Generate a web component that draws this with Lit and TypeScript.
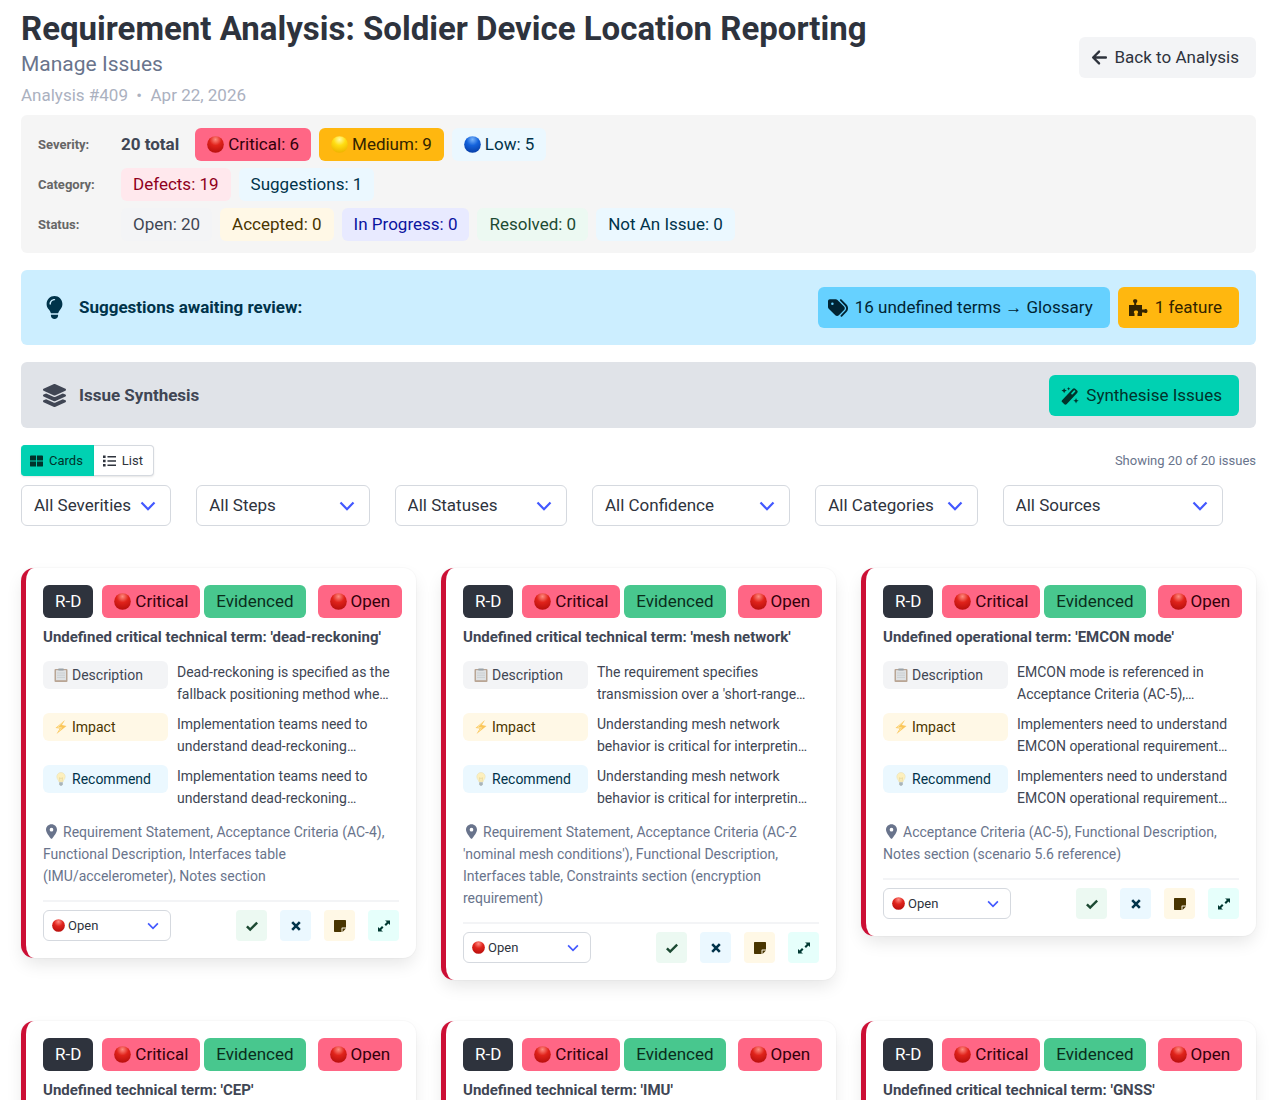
import { LitElement, html, css, svg } from "lit";
import { customElement, property } from "lit/decorators.js";

type Shape = "arrow" | "bulb" | "tags" | "puzzle" | "layers" | "wand" | "grid" | "list" | "chevron" | "check" | "times" | "note" | "expand" | "pin" | "clipboard" | "bolt" | "lamp";

const shapes: Record<Shape, { box: string; body: unknown }> = {
  arrow: { box: "0 0 16 16", body: svg`<path d="M14 8H2.5M7.600 2.400 2 8l5.600 5.600" fill="none" stroke="currentColor" stroke-width="2.200" stroke-linecap="round" stroke-linejoin="round"/>` },
  bulb: { box: "0 0 384 512", body: svg`<path fill="currentColor" d="M272 384c9.600-31.900 29.500-59.100 49.200-86.200l0 0c5.200-7.100 10.400-14.200 15.400-21.400c19.800-28.500 31.400-63 31.400-100.300C368 78.800 289.200 0 192 0S16 78.800 16 176c0 37.300 11.600 71.900 31.400 100.300c5 7.200 10.200 14.300 15.400 21.400l0 0c19.800 27.100 39.700 54.400 49.200 86.200H272zM192 512c44.200 0 80-35.800 80-80V416H112v16c0 44.200 35.800 80 80 80zM112 176c0 8.800-7.200 16-16 16s-16-7.200-16-16c0-61.900 50.100-112 112-112c8.800 0 16 7.200 16 16s-7.200 16-16 16c-44.200 0-80 35.800-80 80z"/>` },
  tags: { box: "0 0 512 512", body: svg`<path fill="currentColor" d="M345 39.100L472.800 168.400c52.400 53 52.400 138.200 0 191.200L360.800 472.900c-9.300 9.400-24.500 9.500-33.900 .2s-9.500-24.500-.2-33.900L438.600 325.900c33.900-34.300 33.900-89.400 0-123.700L310.900 72.900c-9.300-9.400-9.200-24.600 .2-33.900s24.600-9.200 33.900 .2zM0 229.500V80C0 53.500 21.500 32 48 32H197.500c17 0 33.300 6.700 45.300 18.700l168 168c25 25 25 65.500 0 90.500L277.300 442.700c-25 25-65.500 25-90.500 0l-168-168C6.700 262.700 0 246.500 0 229.500zM144 144a32 32 0 1 0 -64 0 32 32 0 1 0 64 0z"/>` },
  puzzle: { box: "0 1 20 20", body: svg`<path fill="currentColor" d="M1 8h5.200V5.900C5.200 5.200 4.900 4.300 5.200 3.200 5.600 1.800 8.800 1.800 9.200 3.200 9.500 4.300 9.200 5.200 8.200 5.900V8H14v4.500h2.300c.5-1 3.200-1 3.200 1.500s-2.700 2.500-3.200 1.500H14V19H9.500v-2.500c1-.6 1-2.900-1.500-2.900S5.500 15.900 6.500 16.500V19H1z"/>` },
  layers: { box: "0 0 512 512", body: svg`<path fill="currentColor" d="M12.400 148l232.900 105.700c6.800 3.100 14.500 3.100 21.300 0l232.900-105.700c16.600-7.500 16.600-32.500 0-40L266.600 2.300a25.600 25.600 0 0 0-21.300 0L12.400 108c-16.600 7.500-16.600 32.500 0 40zm487.200 88.300l-58.100-26.300-161.600 73.300c-7.600 3.400-15.600 5.200-23.900 5.200s-16.300-1.700-23.900-5.200L70.500 210 12.400 236.300c-16.600 7.500-16.600 32.500 0 40l232.900 105.600c6.800 3.100 14.500 3.100 21.300 0l233-105.600c16.600-7.500 16.600-32.500 0-40zm0 127.800l-57.900-26.200-161.900 73.400c-7.600 3.400-15.600 5.200-23.900 5.200s-16.300-1.700-23.900-5.200L70.300 337.900 12.400 364.100c-16.600 7.500-16.600 32.500 0 40l232.900 105.600c6.800 3.100 14.500 3.100 21.300 0l233-105.600c16.600-7.500 16.600-32.500 0-40z"/>` },
  wand: { box: "0 0 20 20", body: svg`<path fill="currentColor" d="M1.200 14.600 13.200 1.900q1.300-1.200 2.600 0l2.100 2.100q1.300 1.300 0 2.600L6.200 19.100q-1.300 1.100-2.500 0l-2.500-2.300q-1-1.100 0-2.200z"/><path d="m12.300 7.300 2.600-2.700" stroke="#00d1b2" stroke-width="2" stroke-linecap="round"/><path fill="currentColor" d="m3.500 1 .9 2.100 2.100.9-2.100.9L3.500 7l-.9-2.100L.5 4l2.100-.9zM8.500 0l.6 1.400 1.400.6-1.400.6-.6 1.400-.6-1.400L6.500 2l1.400-.6zM16.700 12.300l.9 2.100 2.100.9-2.100.9-.9 2.100-.9-2.100-2.100-.9 2.100-.9z"/>` },
  grid: { box: "0 0 14 12", body: svg`<path fill="currentColor" d="M1 0h5.500v5.500H0V1q0-1 1-1zM7.500 0H13q1 0 1 1v4.500H7.500zM0 6.500h6.500V12H1q-1 0-1-1zM7.500 6.500H14V11q0 1-1 1H7.500z"/>` },
  list: { box: "0 0 14 12", body: svg`<path fill="currentColor" d="M0 0h2.800v2.800H0zM0 4.600h2.800v2.800H0zM0 9.200h2.800V12H0zM4.800.6H14v1.600H4.800zM4.800 5.200H14v1.600H4.800zM4.800 9.800H14v1.600H4.800z"/>` },
  chevron: { box: "0 0 16 10", body: svg`<path d="m1.500 1.500 6.500 6.700 6.500-6.700" fill="none" stroke="#4258ff" stroke-width="2.200"/>` },
  check: { box: "0 0 12 12", body: svg`<path d="m.9 6.300 3.300 3.300 7-7" fill="none" stroke="currentColor" stroke-width="2.500"/>` },
  times: { box: "0 0 12 12", body: svg`<path d="m2.200 2.200 7.600 7.600m0-7.600L2.200 9.800" fill="none" stroke="currentColor" stroke-width="2.600"/>` },
  note: { box: "0 0 12 12", body: svg`<path fill="currentColor" d="M.7 0h10.600q.7 0 .7.700V7.500H8.200q-.7 0-.7.700V12H.7Q0 12 0 11.300V.7Q0 0 .7 0zM8.500 8.500H12L8.500 12z"/>` },
  expand: { box: "0 0 12 12", body: svg`<path fill="currentColor" d="M7 .5h5V5l-1.600-1.500L8 5.900 6.500 4.400 8.900 2zM5 11.500H0V7l1.600 1.500L4 6.100l1.500 1.500L3.100 10z"/>` },
  pin: { box: "0 0 384 512", body: svg`<path fill="currentColor" d="M215.700 499.200C267 435 384 279.400 384 192C384 86 298 0 192 0S0 86 0 192c0 87.400 117 243 168.300 307.200c12.300 15.300 35.100 15.300 47.400 0zM192 128a64 64 0 1 1 0 128 64 64 0 1 1 0-128z"/>` },
  clipboard: { box: "0 0 14 14", body: svg`<rect x=".5" y="1" width="13" height="13" rx="1" fill="#b9a594"/><rect x="2" y="2.200" width="10" height="10" fill="#dfe2e4"/><path d="M3 5h8M3 7.200h8M3 9.400h8" stroke="#c3c8cc" stroke-width=".7"/><rect x="4.200" y=".4" width="5.600" height="2" rx=".6" fill="#9aa2a8"/>` },
  bolt: { box: "0 0 14 14", body: svg`<path fill="#fbc558" d="M11 0 1.500 8l4.300.5L2.500 14 12.500 5.900l-4.600-.8z"/><path d="M8.800 2.600 3.600 7.300l4 .4-2.400 3.600" fill="none" stroke="#fde6a4" stroke-width=".8"/>` },
  lamp: { box: "0 0 14 14", body: svg`<path fill="#fdf0bd" stroke="#e5dcb4" stroke-width=".5" d="M7 .5a4.200 4.200 0 0 0-4.200 4.300C2.800 7.200 4.800 8 5 10h4c.2-2 2.200-2.800 2.200-5.200A4.200 4.200 0 0 0 7 .5z"/><path fill="#a9b4b8" d="M5.200 10.200h3.600v2.400L7.800 13.700H6.200l-1-1.100z"/><path d="M6 9.500 5.500 5.700l1.500.8 1.500-.8L8 9.500" fill="none" stroke="#d8c78a" stroke-width=".5"/>` },
};

const balls = {
  red: ["#ff8a80", "#e0231b", "#b80f0d"],
  yellow: ["#fff9a0", "#ffdd12", "#eeb400"],
  blue: ["#78b4fa", "#1463dc", "#083fa8"],
};

const icon = (name: Shape, cls = "") => html`<svg class="icon ${name} ${cls}" viewBox=${shapes[name].box} aria-hidden="true">${shapes[name].body}</svg>`;

const ball = (color: keyof typeof balls) => {
  const [light, mid, dark] = balls[color];
  return html`<svg class="ball" viewBox="0 0 18 18" aria-hidden="true">
    <defs><radialGradient id=${color} cx=".5" cy=".2" r=".8"><stop offset="0" stop-color=${light}/><stop offset=".45" stop-color=${mid}/><stop offset="1" stop-color=${dark}/></radialGradient></defs>
    <circle cx="9" cy="9" r="8.800" fill="url(#${color})"/>
  </svg>`;
};

const base = css`
  :host { display: block; font-family: Roboto, "Liberation Sans", sans-serif; font-size: 17px; line-height: 25px; color: #404654; }
  * { box-sizing: border-box; }
  button, select { font: inherit; color: inherit; margin: 0; cursor: pointer; }
  .icon { display: block; flex: none; }
  .ball { display: block; flex: none; width: 17px; height: 17px; }
  .tag { display: inline-flex; align-items: center; flex: none; gap: 4px; height: 33px; padding: 0 12px; border-radius: 6px; white-space: nowrap; }
  .critical { background: #ff6685; color: #33000a; }
  .medium { background: #ffb70f; color: #332400; }
  .low, .info { background: #ebf8ff; color: #00334a; }
  .danger { background: #ffe8ed; color: #8f0020; }
  .plain { background: #f3f4f6; color: #404654; }
  .warning { background: #fff8e6; color: #493500; }
  .link { background: #e8eaff; color: #0a13a0; }
  .good { background: #ecf9f2; color: #1c4a33; }
  .dark { background: #2e333d; color: #fff; }
  .evidenced { background: #48c78e; color: #0a2e1c; }
  .select { display: grid; align-items: center; }
  .select > * { grid-row: 1; grid-column: 1; }
  .select select { width: 100%; appearance: none; background: #fff; border: 1px solid #d5d9df; border-radius: 6px; color: #2e333d; }
  .select .chevron { justify-self: end; pointer-events: none; }
`;

interface Issue {
  title: string;
  description: string;
  impact: string;
  recommend: string;
  location: string;
}

@customElement("issue-card")
export class IssueCard extends LitElement {
  @property({ attribute: false }) issue!: Issue;

  static styles = [
    base,
    css`
      .card { border-left: 5px solid #cc0f35; border-radius: 13px; padding: 17px; background: #fff; box-shadow: 0 8px 17px -2px rgba(10, 10, 10, 0.1), 0 0 0 1px rgba(10, 10, 10, 0.02); }
      .head { display: flex; }
      .dark { margin-right: 9px; }
      .evidenced { margin: 0 12px 0 4px; }
      h2 { margin: 8px 0 13px; font-size: 15px; line-height: 22px; font-weight: 700; }
      .row { display: grid; grid-template-columns: 125px minmax(0, 1fr); align-items: start; gap: 9px; margin-bottom: 8px; font-size: 14px; line-height: 22px; }
      .row p { margin: 0; }
      .row .tag { height: 28px; padding: 0 11px; }
      .row .icon { width: 14px; height: 14px; }
      .location { margin: 12px 0 13px; font-size: 14px; line-height: 22px; color: #69748c; }
      .pin { display: inline-block; width: 11px; height: 15px; margin: 0 6px 0 3px; vertical-align: -2px; }
      .foot { display: flex; align-items: center; justify-content: space-between; border-top: 2px solid #f3f4f6; padding-top: 8px; }
      .select { width: 128px; font-size: 13px; }
      .select select { height: 31px; padding: 0 24px; }
      .select .ball { width: 13px; height: 13px; margin-left: 9px; pointer-events: none; z-index: 1; }
      .select .chevron { width: 12px; height: 8px; margin-right: 12px; }
      .actions { display: flex; gap: 13px; }
      .actions button { display: grid; place-items: center; width: 31px; height: 31px; padding: 0; border: 0; border-radius: 4px; }
      .actions .icon { width: 12px; height: 12px; }
      .actions .detail { background: #e6fffb; color: #003831; }
    `,
  ];

  render() {
    const { title, description, impact, recommend, location } = this.issue;
    return html`<article class="card">
      <div class="head">
        <span class="tag dark">R-D</span>
        <span class="tag critical">${ball("red")}Critical</span>
        <span class="tag evidenced">Evidenced</span>
        <span class="tag critical">${ball("red")}Open</span>
      </div>
      <h2>${title}</h2>
      <div class="row"><span class="tag plain">${icon("clipboard")}Description</span><p>${description}</p></div>
      <div class="row"><span class="tag warning">${icon("bolt")}Impact</span><p>${impact}</p></div>
      <div class="row"><span class="tag info">${icon("lamp")}Recommend</span><p>${recommend}</p></div>
      <p class="location">${icon("pin")}${location}</p>
      <div class="foot">
        <div class="select">
          <select aria-label="Status"><option>Open</option></select>
          ${ball("red")}${icon("chevron")}
        </div>
        <div class="actions">
          <button class="good" aria-label="Accept">${icon("check")}</button>
          <button class="info" aria-label="Dismiss">${icon("times")}</button>
          <button class="warning" aria-label="Note">${icon("note")}</button>
          <button class="detail" aria-label="Expand">${icon("expand")}</button>
        </div>
      </div>
    </article>`;
  }
}

const same = (text: string) => ({ impact: text, recommend: text });

const issues: Issue[] = [
  {
    title: "Undefined critical technical term: 'dead-reckoning'",
    description: "Dead-reckoning is specified as the fallback positioning method whe…",
    ...same("Implementation teams need to understand dead-reckoning…"),
    location: "Requirement Statement, Acceptance Criteria (AC-4), Functional Description, Interfaces table (IMU/accelerometer), Notes section",
  },
  {
    title: "Undefined critical technical term: 'mesh network'",
    description: "The requirement specifies transmission over a 'short-range…",
    ...same("Understanding mesh network behavior is critical for interpretin…"),
    location: "Requirement Statement, Acceptance Criteria (AC-2 'nominal mesh conditions'), Functional Description, Interfaces table, Constraints section (encryption requirement)",
  },
  {
    title: "Undefined operational term: 'EMCON mode'",
    description: "EMCON mode is referenced in Acceptance Criteria (AC-5),…",
    ...same("Implementers need to understand EMCON operational requirement…"),
    location: "Acceptance Criteria (AC-5), Functional Description, Notes section (scenario 5.6 reference)",
  },
  ...["Undefined technical term: 'CEP'", "Undefined technical term: 'IMU'", "Undefined critical technical term: 'GNSS'"].map((title) => ({
    title,
    description: "",
    ...same(""),
    location: "",
  })),
];

const filters: [string, string][] = [
  ["All Severities", "severity"],
  ["All Steps", "steps"],
  ["All Statuses", "statuses"],
  ["All Confidence", "confidence"],
  ["All Categories", "categories"],
  ["All Sources", "sources"],
];

@customElement("app-root")
export class AppRoot extends LitElement {
  static styles = [
    base,
    css`
      :host { background: #fff; }
      .page { padding: 8px 24px 24px 21px; }
      .header { display: flex; justify-content: space-between; align-items: center; margin-bottom: 8px; }
      h1 { margin: 0; font-size: 33px; line-height: 41px; font-weight: 700; color: #2e333d; }
      .subtitle { margin: 0 0 3px; font-size: 21px; line-height: 31px; color: #69748c; }
      .meta { margin: 0; line-height: 24px; color: #abb1bf; }
      .btn { display: inline-flex; align-items: center; gap: 7px; height: 41px; padding: 0 17px 0 12px; border: 0; border-radius: 6px; white-space: nowrap; text-decoration: none; }
      .back { background: #f3f4f6; color: #2e333d; }
      .back .icon { width: 17px; height: 17px; }
      .summary { display: grid; gap: 7px; padding: 13px 17px 12px; margin-bottom: 17px; border-radius: 6px; background: #f5f5f5; }
      .line { display: flex; align-items: center; gap: 8px; }
      .line b { flex: none; width: 75px; font-size: 13px; color: #666; }
      .line strong { margin-right: 8px; }
      .banner { display: flex; align-items: center; gap: 8px; margin-bottom: 17px; border-radius: 6px; padding: 17px; font-weight: 700; background: #cceeff; color: #00334a; }
      .banner .lead { width: 33px; height: 23px; }
      .banner h2 { flex: 1; margin: 0; font-size: 17px; line-height: 25px; }
      .glossary { background: #66d1ff; color: #002433; font-weight: 400; }
      .feature { background: #ffb70f; color: #332400; font-weight: 400; }
      .banner .btn .icon { width: 20px; height: 20px; }
      .btn.glossary, .btn.feature { padding-left: 10px; }
      .synthesis { background: #e0e3e8; color: #404654; padding: 13px 17px 12px; }
      .synthesise { background: #00d1b2; color: #00332b; font-weight: 400; }
      .banner .synthesise .icon { width: 18px; height: 18px; }
      .bar { display: flex; justify-content: space-between; align-items: center; font-size: 13px; color: #69748c; margin-bottom: 9px; }
      .toggle { display: flex; color: #2e333d; }
      .toggle button { display: flex; align-items: center; gap: 6px; height: 31px; padding: 0 10px 0 9px; border: 1px solid #d5d9df; border-left: 0; border-radius: 0 4px 4px 0; background: #fff; box-shadow: 0 1px 2px rgba(10, 10, 10, 0.1); }
      .toggle .on { background: #00d1b2; border-color: #00d1b2; color: #00332b; border-radius: 4px 0 0 4px; }
      .toggle .icon { width: 13px; height: 12px; }
      .filters { display: grid; grid-template-columns: 150fr 173fr 172fr 198fr 162fr 220fr; gap: 25px; padding-right: 33px; margin-bottom: 42px; }
      .filters select { height: 41px; padding: 0 12px; }
      .filters .chevron { width: 16px; height: 10px; margin-right: 15px; }
      .cards { display: grid; grid-template-columns: repeat(3, minmax(0, 1fr)); align-items: start; gap: 41px 25px; }
    `,
  ];

  render() {
    return html`<main class="page">
      <header class="header">
        <div>
          <h1>Requirement Analysis: Soldier Device Location Reporting</h1>
          <p class="subtitle">Manage Issues</p>
          <p class="meta">Analysis #409 &nbsp;•&nbsp; Apr 22, 2026</p>
        </div>
        <a class="btn back" href="#analysis">${icon("arrow")}Back to Analysis</a>
      </header>
      <section class="summary">
        <div class="line">
          <b>Severity:</b><strong>20 total</strong>
          <span class="tag critical">${ball("red")}Critical: 6</span>
          <span class="tag medium">${ball("yellow")}Medium: 9</span>
          <span class="tag low">${ball("blue")}Low: 5</span>
        </div>
        <div class="line">
          <b>Category:</b>
          <span class="tag danger">Defects: 19</span>
          <span class="tag info">Suggestions: 1</span>
        </div>
        <div class="line">
          <b>Status:</b>
          <span class="tag plain">Open: 20</span>
          <span class="tag warning">Accepted: 0</span>
          <span class="tag link">In Progress: 0</span>
          <span class="tag good">Resolved: 0</span>
          <span class="tag info">Not An Issue: 0</span>
        </div>
      </section>
      <section class="banner">
        ${icon("bulb", "lead")}
        <h2>Suggestions awaiting review:</h2>
        <button class="btn glossary">${icon("tags")}16 undefined terms → Glossary</button>
        <button class="btn feature">${icon("puzzle")}1 feature</button>
      </section>
      <section class="banner synthesis">
        ${icon("layers", "lead")}
        <h2>Issue Synthesis</h2>
        <button class="btn synthesise">${icon("wand")}Synthesise Issues</button>
      </section>
      <div class="bar">
        <div class="toggle">
          <button class="on" aria-pressed="true">${icon("grid")}Cards</button>
          <button aria-pressed="false">${icon("list")}List</button>
        </div>
        <span>Showing 20 of 20 issues</span>
      </div>
      <div class="filters">
        ${filters.map(([label, name]) => html`<div class="select"><select name=${name} aria-label=${label}><option>${label}</option></select>${icon("chevron")}</div>`)}
      </div>
      <section class="cards">${issues.map((issue) => html`<issue-card .issue=${issue}></issue-card>`)}</section>
    </main>`;
  }
}
